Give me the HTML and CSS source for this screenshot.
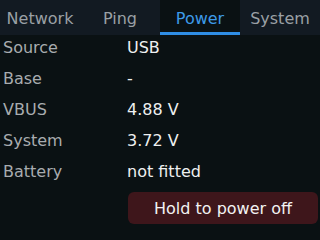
FILE: index.html
```html
<!DOCTYPE html>
<html lang="en">
<head>
    <meta charset="UTF-8">
    <meta name="viewport" content="width=device-width, initial-scale=1.0">
    <title>Power</title>
    <link rel="stylesheet" href="styles.css">
</head>
<body>
    <div class="tabs">
        <div class="tab">Network</div>
        <div class="tab">Ping</div>
        <div class="tab active">Power</div>
        <div class="tab">System</div>
    </div>

    <div class="content">
        <div class="row"><span class="label">Source</span><span class="value">USB</span></div>
        <div class="row"><span class="label">Base</span><span class="value">-</span></div>
        <div class="row"><span class="label">VBUS</span><span class="value">4.88 V</span></div>
        <div class="row"><span class="label">System</span><span class="value">3.72 V</span></div>
        <div class="row"><span class="label">Battery</span><span class="value">not fitted</span></div>

        <div class="actions">
            <button class="btn-off">Hold to power off</button>
        </div>
    </div>
</body>
</html>
```

FILE: styles.css
```css
body {
    margin: 0;
    width: 320px;
    height: 240px;
    overflow: hidden;
    background: #0a1113;
    font-family: "DejaVu Sans", sans-serif;
    font-size: 16px;
}

.tabs {
    display: flex;
    height: 35px;
    background: #121a22;
}

.tab {
    width: 80px;
    display: flex;
    align-items: center;
    justify-content: center;
    color: #9aa0a5;
    box-sizing: border-box;
    padding-top: 1px;
}

.tab.active {
    background: #0a1113;
    color: #3d9ae8;
    border-bottom: 3px solid #2f8de4;
    padding-top: 4px;
}

.content {
    padding: 2px 0 0 3px;
}

.row {
    display: flex;
    line-height: 22px;
    margin-bottom: 9px;
}

.label {
    width: 124px;
    color: #a8acaf;
}

.value {
    color: #eef0f0;
}

.actions {
    display: flex;
    justify-content: flex-end;
    margin-top: 2px;
    padding-right: 2px;
}

button {
    width: 190px;
    height: 32px;
    border: none;
    border-radius: 6px;
    font-family: inherit;
    font-size: 16px;
    cursor: pointer;
}

.btn-off {
    background: #3e161b;
    color: #f2f2f2;
}
```
